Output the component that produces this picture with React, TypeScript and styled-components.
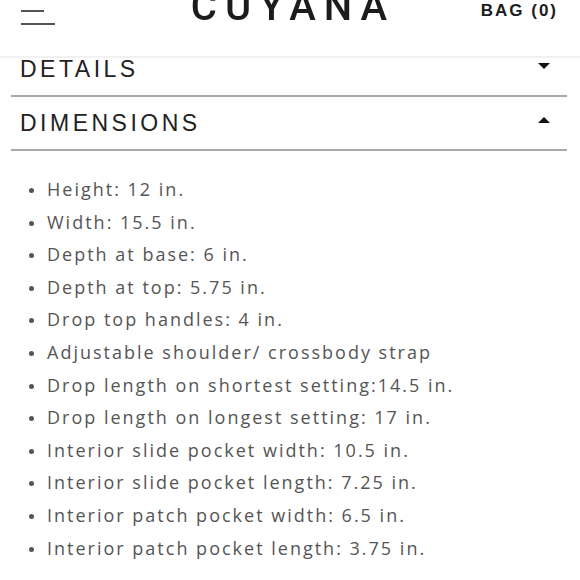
import styled, { createGlobalStyle } from 'styled-components';

const GlobalStyle = createGlobalStyle`
  html, body {
    margin: 0;
    padding: 0;
    background: #ffffff;
    font-family: "Liberation Sans", Arial, sans-serif;
  }
`

const Header = styled.header`
  position: fixed;
  top: 0;
  left: 0;
  right: 0;
  height: 56px;
  background: #ffffff;
  border-bottom: 2px solid #f1f1f1;
  z-index: 2;
`
const HeaderInner = styled.div`
  display: flex;
  align-items: flex-start;
  justify-content: space-between;
  height: 100%;
  padding: 0 22px 0 21px;
`
const Burger = styled.div`
  display: flex;
  flex-direction: column;
  gap: 11px;
  padding-top: 10px;
  width: 34px;
`
const BurgerLine = styled.span<{ $short?: boolean }>`
  display: block;
  height: 2px;
  width: ${(p) => (p.$short ? '23px' : '34px')};
  background: #555555;
`
const Logo = styled.div`
  position: absolute;
  left: 0;
  right: 0;
  top: -17px;
  text-align: center;
  font-family: Roboto, "Liberation Sans", sans-serif;
  font-weight: 500;
  font-size: 40px;
  letter-spacing: 8px;
  color: #1c1c1c;
  padding-left: 6px;
  pointer-events: none;
`
const Bag = styled.div`
  padding-top: 1px;
  font-size: 17px;
  font-weight: 700;
  letter-spacing: 2px;
  color: #1c1c1c;
`

const Main = styled.main`
  padding: 43px 13px 0 11px;
`
const SectionRow = styled.div`
  display: flex;
  align-items: center;
  justify-content: space-between;
  height: 52px;
  padding: 0 17px 0 9px;
  border-bottom: 2px solid #a9a9a9;
`
const SectionTitle = styled.span`
  font-size: 23px;
  letter-spacing: 3.5px;
  color: #222222;
`
const Caret = styled.span<{ $up?: boolean }>`
  width: 0;
  height: 0;
  border-left: 6px solid transparent;
  border-right: 6px solid transparent;
  ${(p) => (p.$up ? 'border-bottom: 6px solid #111;' : 'border-top: 6px solid #111;')}
  margin-top: -6px;
`
const List = styled.ul`
  list-style: none;
  margin: 22px 0 0;
  padding: 0 0 0 36px;
`
const Item = styled.li`
  position: relative;
  font-family: "Open Sans", "Liberation Sans", sans-serif;
  font-size: 18px;
  line-height: 32.6px;
  letter-spacing: 2px;
  color: #555555;

  &::before {
    content: '';
    position: absolute;
    left: -18px;
    top: 15px;
    width: 5px;
    height: 5px;
    border-radius: 50%;
    background: #555555;
  }
`

const dimensions = [
  'Height: 12 in.',
  'Width: 15.5 in.',
  'Depth at base: 6 in.',
  'Depth at top: 5.75 in.',
  'Drop top handles: 4 in.',
  'Adjustable shoulder/ crossbody strap',
  'Drop length on shortest setting:14.5 in.',
  'Drop length on longest setting: 17 in.',
  'Interior slide pocket width: 10.5 in.',
  'Interior slide pocket length: 7.25 in.',
  'Interior patch pocket width: 6.5 in.',
  'Interior patch pocket length: 3.75 in.',
]

const App = () => {
  return (
    <>
      <GlobalStyle />
      <Header>
        <HeaderInner>
          <Burger>
            <BurgerLine $short />
            <BurgerLine />
          </Burger>
          <Logo>CUYANA</Logo>
          <Bag>BAG (0)</Bag>
        </HeaderInner>
      </Header>
      <Main>
        <SectionRow>
          <SectionTitle>DETAILS</SectionTitle>
          <Caret />
        </SectionRow>
        <SectionRow>
          <SectionTitle>DIMENSIONS</SectionTitle>
          <Caret $up />
        </SectionRow>
        <List>
          {dimensions.map((d) => (
            <Item key={d}>{d}</Item>
          ))}
        </List>
      </Main>
    </>
  )
}

export default App
